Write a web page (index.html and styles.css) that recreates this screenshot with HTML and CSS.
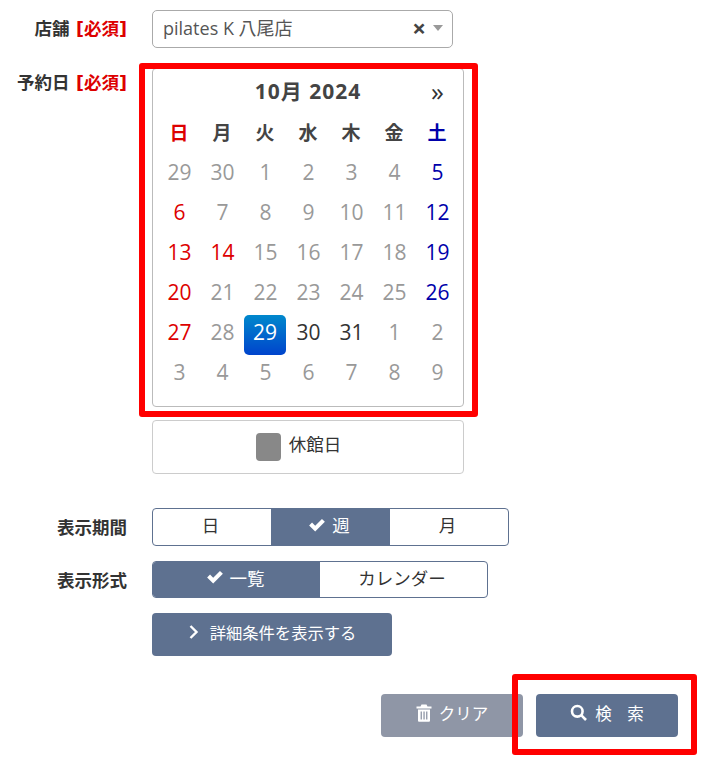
FILE: index.html
```html
<!DOCTYPE html>
<html lang="ja">
<head>
  <meta charset="UTF-8">
  <title>予約検索</title>
  <link rel="stylesheet" href="styles.css">
</head>
<body>

  <form class="search-form">
    <div class="row row-shop">
      <div class="label">店舗 <span class="required">[必須]</span></div>
      <div class="select">
        <span class="select-text">pilates K 八尾店</span>
        <span class="select-clear">×</span>
        <span class="select-arrow"></span>
      </div>
    </div>

    <div class="row row-date">
      <div class="label">予約日 <span class="required">[必須]</span></div>
      <div>
        <div class="calendar">
          <div class="cal-head">
            <span class="cal-title">10月 2024</span>
            <span class="cal-next">»</span>
          </div>
          <div class="cal-grid">
            <div class="dow sun">日</div><div class="dow">月</div><div class="dow">火</div><div class="dow">水</div><div class="dow">木</div><div class="dow">金</div><div class="dow sat">土</div>

            <div class="day">29</div><div class="day">30</div><div class="day">1</div><div class="day">2</div><div class="day">3</div><div class="day">4</div><div class="day sat">5</div>
            <div class="day sun">6</div><div class="day">7</div><div class="day">8</div><div class="day">9</div><div class="day">10</div><div class="day">11</div><div class="day sat">12</div>
            <div class="day sun">13</div><div class="day sun">14</div><div class="day">15</div><div class="day">16</div><div class="day">17</div><div class="day">18</div><div class="day sat">19</div>
            <div class="day sun">20</div><div class="day">21</div><div class="day">22</div><div class="day">23</div><div class="day">24</div><div class="day">25</div><div class="day sat">26</div>
            <div class="day sun">27</div><div class="day">28</div><div class="day selected">29</div><div class="day open">30</div><div class="day open">31</div><div class="day">1</div><div class="day">2</div>
            <div class="day">3</div><div class="day">4</div><div class="day">5</div><div class="day">6</div><div class="day">7</div><div class="day">8</div><div class="day">9</div>
          </div>
        </div>
        <div class="legend">
          <span class="legend-mark"></span>
          <span class="legend-text">休館日</span>
        </div>
      </div>
    </div>

    <div class="row row-period">
      <div class="label">表示期間</div>
      <div class="toggle toggle-period">
        <div class="toggle-item">日</div>
        <div class="toggle-item active">
          <svg class="icon-check" viewBox="0 0 16 16"><path d="M1 8.4 L3.6 5.8 L6.4 8.6 L12.4 2.6 L15 5.2 L6.4 13.8 Z"/></svg>
          週
        </div>
        <div class="toggle-item">月</div>
      </div>
    </div>

    <div class="row row-format">
      <div class="label">表示形式</div>
      <div class="toggle toggle-format">
        <div class="toggle-item active">
          <svg class="icon-check" viewBox="0 0 16 16"><path d="M1 8.4 L3.6 5.8 L6.4 8.6 L12.4 2.6 L15 5.2 L6.4 13.8 Z"/></svg>
          一覧
        </div>
        <div class="toggle-item">カレンダー</div>
      </div>
    </div>

    <div class="row row-detail">
      <div></div>
      <button type="button" class="btn btn-detail">
        <svg class="icon-chevron" viewBox="0 0 12 16"><path d="M2.5 2 L8.5 8 L2.5 14" /></svg>
        詳細条件を表示する
      </button>
    </div>

    <div class="actions">
      <button type="button" class="btn btn-clear">
        <svg class="icon-trash" viewBox="0 0 16 18"><path d="M5.5 0.5h5l1 2h4v2h-15v-2h4zM2 5.5h12v11.2a1 1 0 0 1-1 1H3a1 1 0 0 1-1-1zM4.6 7.5v8h1.3v-8zM7.4 7.5v8h1.3v-8zM10.1 7.5v8h1.3v-8z" fill-rule="evenodd"/></svg>
        クリア
      </button>
      <button type="button" class="btn btn-search">
        <svg class="icon-search" viewBox="0 0 18 18"><circle cx="7.3" cy="7.3" r="5.3"/><path d="M11.2 11.2 L16 16"/></svg>
        <span class="search-text">検 索</span>
      </button>
    </div>
  </form>

  <!-- red annotations on top of the screenshot -->
  <div class="mark mark-calendar"></div>
  <div class="mark mark-search"></div>

</body>
</html>
```

FILE: styles.css
```css
* {
  box-sizing: border-box;
}
body {
  margin: 0;
  position: relative;
  height: 766px;
  overflow: hidden;
  background: #fff;
  font-family: "Open Sans", "Noto Sans CJK JP", sans-serif;
  font-size: 16px;
  color: #333;
}
.search-form {
  padding-top: 10px;
}
.row {
  display: grid;
  grid-template-columns: 127px auto;
  column-gap: 25px;
  justify-content: start;
}
.label {
  text-align: right;
  font-size: 17.5px;
  font-weight: bold;
  line-height: 36px;
  color: #333;
}
.required {
  margin-left: 2px;
  font-family: "DejaVu Sans", "Noto Sans CJK JP", sans-serif;
  color: #d00;
}
.row-date .label {
  margin-top: -4px;
}
.row-period .label,
.row-format .label {
  margin-top: 1px;
}
.select {
  width: 301px;
  height: 38px;
  display: flex;
  align-items: center;
  padding: 0 9px 5px 10px;
  border: 1px solid #aaa;
  border-radius: 5px;
  font-size: 18px;
  color: #555;
}
.select-text {
  flex: 1;
}
.select-clear {
  font-size: 24px;
  line-height: 24px;
  font-weight: bold;
  color: #444;
  margin: 3px 7px 0 0;
}
.select-arrow {
  width: 0;
  height: 0;
  margin-top: 3px;
  border-left: 5px solid transparent;
  border-right: 5px solid transparent;
  border-top: 6px solid #999;
}
.row-date {
  margin-top: 20px;
}
.calendar {
  width: 312px;
  height: 339px;
  border: 1px solid #bbb;
  border-radius: 4px;
  padding: 0 5px;
}
.cal-head {
  height: 46px;
  padding-bottom: 4px;
  display: grid;
  grid-template-columns: 1fr auto;
  align-items: center;
  position: relative;
}
.cal-title {
  font-size: 21px;
  letter-spacing: 1px;
  font-weight: bold;
  color: #444;
  text-align: center;
}
.cal-next {
  position: absolute;
  right: 14px;
  top: 4px;
  font-size: 26px;
  line-height: 36px;
  color: #333;
}
.cal-grid {
  display: grid;
  grid-template-columns: repeat(7, 43px);
  grid-auto-rows: 40px;
}
.dow {
  display: flex;
  align-items: center;
  justify-content: center;
  padding: 0 1px 6px 0;
  font-size: 19px;
  font-weight: bold;
  color: #444;
}
.day {
  display: flex;
  align-items: center;
  justify-content: center;
  padding-bottom: 6px;
  font-size: 21px;
  color: #999;
}
.sun {
  color: #d00;
}
.sat {
  color: #00a;
}
.day.open {
  color: #333;
}
.day.selected {
  color: #fff;
  margin-right: 1px;
  border-radius: 5px;
  background: linear-gradient(to bottom, #0088cc, #0044cc);
}
.legend {
  width: 312px;
  height: 54px;
  margin-top: 13px;
  padding-right: 19px;
  border: 1px solid #ccc;
  border-radius: 4px;
  display: flex;
  align-items: center;
  justify-content: center;
  gap: 8px;
  font-size: 17.5px;
}
.legend-mark {
  width: 25px;
  height: 28px;
  border-radius: 4px;
  background: #888;
}
.legend-text {
  padding-bottom: 7px;
}
.row-period {
  margin-top: 34px;
}
.row-format {
  margin-top: 15px;
}
.row-detail {
  margin-top: 15px;
}
.toggle {
  display: grid;
  border: 1px solid #5e7190;
  border-radius: 4px;
  overflow: hidden;
  font-size: 17.5px;
}
.toggle-period {
  width: 357px;
  height: 38px;
  grid-template-columns: 118px 119px 118px;
}
.toggle-format {
  width: 336px;
  height: 37px;
  grid-template-columns: 167px 167px;
}
.toggle-item {
  display: flex;
  align-items: center;
  justify-content: center;
  gap: 6px;
  padding: 0 3px 5px 0;
  color: #333;
}
.toggle-item.active {
  background: #5e7190;
  color: #fff;
}
.icon-check {
  width: 18px;
  height: 18px;
  fill: #fff;
}
.btn {
  display: flex;
  align-items: center;
  justify-content: center;
  padding: 0 0 6px;
  border: none;
  border-radius: 4px;
  background: #5e7190;
  color: #fff;
  font-family: inherit;
  font-size: 16.3px;
}
.btn-detail {
  width: 240px;
  height: 43px;
  gap: 10px;
}
.icon-chevron {
  width: 12px;
  height: 16px;
  fill: none;
  stroke: #fff;
  stroke-width: 2.4;
}
.actions {
  display: flex;
  justify-content: flex-end;
  gap: 13px;
  margin-top: 38px;
  padding-right: 28px;
}
.btn-clear,
.btn-search {
  width: 142px;
  height: 43px;
  gap: 7px;
  font-size: 16.5px;
}
.btn-clear {
  background: #8f96a6;
}
.icon-trash {
  width: 16px;
  height: 18px;
  fill: #fff;
}
.icon-search {
  width: 18px;
  height: 18px;
  fill: none;
  stroke: #fff;
  stroke-width: 2.6;
}
.search-text {
  word-spacing: 11px;
}
.mark {
  position: absolute;
  border: 6px solid #f00;
  border-radius: 3px;
}
.mark-calendar {
  left: 139px;
  top: 63px;
  width: 339px;
  height: 354px;
}
.mark-search {
  left: 512px;
  top: 674px;
  width: 185px;
  height: 81px;
}
```
